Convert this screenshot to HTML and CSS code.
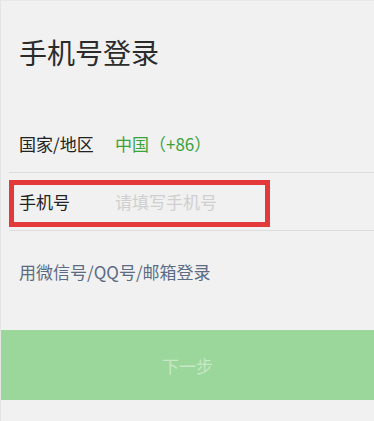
FILE: index.html
```html
<!DOCTYPE html>
<html lang="zh-CN">
  <head>
    <meta charset="utf-8">
    <meta name="viewport" content="width=device-width, initial-scale=1">
    <title>手机号登录</title>
    <link rel="stylesheet" href="styles.css">
  </head>
  <body>
    <div class="page">
      <h1 class="title">手机号登录</h1>

      <div class="form">
        <div class="row">
          <span class="label">国家/地区</span>
          <span class="value green">中国（+86）</span>
        </div>
        <div class="row phoneRow">
          <span class="label">手机号</span>
          <input type="text" class="phoneField" placeholder="请填写手机号">
          <div class="redBox"></div>
        </div>
      </div>

      <p class="otherLogin">用微信号/QQ号/邮箱登录</p>

      <button class="next">下一步</button>
    </div>
  </body>
</html>
```

FILE: styles.css
```css
body{
  margin: 0;
  background-color: #f1f1f1;
  font-family: "Noto Sans CJK SC", "Noto Sans", sans-serif;
  color: #222;
}

.page{
  height: 421px;
  border-left: 1px solid #e4e4e4;
  border-top: 1px solid #e8e8e8;
  box-sizing: border-box;
}

.title{
  margin: 0;
  padding: 31px 0 0 18px;
  font-size: 28px;
  font-weight: normal;
  line-height: 40px;
  color: #2b2b2b;
}

.form{
  margin: 43px 0 0 8px;
}

.row{
  position: relative;
  display: flex;
  align-items: center;
  height: 57px;
  border-bottom: 1px solid #dcdcdc;
  padding-left: 10px;
  font-size: 17px;
}

.label{
  width: 96px;
  color: #222;
}

.green{
  color: #3ca33c;
}

.phoneField{
  border: none;
  background: transparent;
  font-family: inherit;
  font-size: 17px;
  padding: 0;
  outline: none;
  width: 150px;
}

.phoneField::placeholder{
  color: #cfcfcf;
}

.redBox{
  position: absolute;
  left: 0;
  top: 7px;
  width: 261px;
  height: 47px;
  border: 5px solid #e4393b;
  box-sizing: border-box;
}

.otherLogin{
  margin: 29px 0 0 18px;
  font-size: 17px;
  line-height: 24px;
  color: #5b6b84;
}

.next{
  display: block;
  width: 100%;
  height: 70px;
  margin-top: 46px;
  border: none;
  background-color: #9bd69a;
  color: #c7e9c6;
  font-family: inherit;
  font-size: 17px;
}
```
